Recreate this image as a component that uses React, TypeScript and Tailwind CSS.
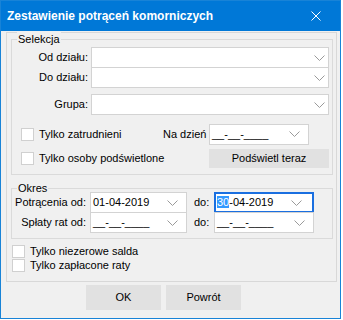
import type { ReactNode } from 'react'

// strzałka rozwijania (combo / data)
function Chevron({ className = '' }: { className?: string }) {
  return (
    <svg width="11" height="6" viewBox="0 0 11 6" className={className}>
      <polyline points="0.5,0.5 5.5,5.5 10.5,0.5" fill="none" stroke="#9a9a9a" strokeWidth="1" />
    </svg>
  )
}

function Combo({ className = '' }: { className?: string }) {
  return (
    <div className={`flex h-[21px] w-[238px] items-center justify-end border border-[#d3d3d3] bg-white pr-[3px] ${className}`}>
      <Chevron />
    </div>
  )
}

function DateBox({ value, focused, className = '' }: { value?: ReactNode; focused?: boolean; className?: string }) {
  return (
    <div
      className={`flex h-[21px] items-center bg-white ${
        focused ? 'border-2 border-[#1a6fe0] pl-[1px]' : 'border border-[#d3d3d3] pl-[2px]'
      } ${className}`}
    >
      <span className="leading-none">{value ?? '__-__-____'}</span>
      <Chevron className={focused ? 'ml-auto mr-[10px]' : 'ml-auto mr-[8px]'} />
    </div>
  )
}

function Check({ label, className = '' }: { label: string; className?: string }) {
  return (
    <div className={`flex items-center ${className}`}>
      <div className="h-[13px] w-[13px] border border-[#d0d0d0] bg-white" />
      <span className="ml-[5px] leading-none">{label}</span>
    </div>
  )
}

function Group({ title, className = '', children }: { title: string; className?: string; children: ReactNode }) {
  return (
    <div className={`relative border border-[#dadada] ${className}`}>
      <span className="absolute -top-[8px] left-[5px] bg-[#f0f0f0] px-[1px] leading-[14px]">{title}</span>
      {children}
    </div>
  )
}

export default function App() {
  return (
    <div className="h-[320px] w-[343px] bg-white font-['Liberation_Sans',Arial,sans-serif] text-[11px] text-black">
      <div className="flex h-[319px] w-[341px] flex-col border border-[#1883d7] bg-[#f0f0f0]">
        {/* pasek tytułu */}
        <div className="flex h-[30px] shrink-0 items-center bg-[#0078d7] pl-[6px] pr-[19px] text-white">
          <span className="text-[12px] font-bold">Zestawienie potrąceń komorniczych</span>
          <svg width="10" height="10" viewBox="0 0 10 10" className="ml-auto">
            <path d="M0.5 0.5 L9.5 9.5 M9.5 0.5 L0.5 9.5" stroke="white" strokeWidth="1" />
          </svg>
        </div>

        <div className="ml-[5px] mt-[1px] flex h-[250px] w-[331px] flex-col border border-[#d8d8d8] pl-[4px] pt-[6px]">
          <Group title="Selekcja" className="h-[136px] w-[322px] pt-[7px]">
            <div className="flex items-center">
              <span className="w-[76px] text-right">Od działu:</span>
              <Combo className="ml-[3px]" />
            </div>
            <div className="-mt-[1px] flex items-center">
              <span className="w-[76px] text-right">Do działu:</span>
              <Combo className="ml-[3px]" />
            </div>
            <div className="mt-[6px] flex items-center">
              <span className="w-[76px] text-right">Grupa:</span>
              <Combo className="ml-[3px]" />
            </div>
            <div className="mt-[9px] flex h-[20px] items-center pl-[9px]">
              <Check label="Tylko zatrudnieni" className="w-[142px]" />
              <span className="w-[46px]">Na dzień</span>
              <DateBox className="w-[100px]" />
            </div>
            <div className="mt-[5px] flex h-[19px] items-center pl-[9px]">
              <Check label="Tylko osoby podświetlone" className="w-[188px]" />
              <div className="flex h-[19px] w-[120px] items-center justify-center bg-[#e1e1e1]">Podświetl teraz</div>
            </div>
          </Group>

          <Group title="Okres" className="mt-[13px] h-[51px] w-[322px] pt-[3px]">
            <div className="flex items-center">
              <span className="w-[74px] text-right">Potrącenia od:</span>
              <DateBox value="01-04-2019" className="ml-[4px] w-[97px]" />
              <span className="ml-[7px] w-[20px]">do:</span>
              <DateBox
                focused
                value={
                  <>
                    <span className="bg-[#3399ff] text-white">30</span>-04-2019
                  </>
                }
                className="w-[100px]"
              />
            </div>
            <div className="-mt-[1px] flex items-center">
              <span className="w-[74px] text-right">Spłaty rat od:</span>
              <DateBox className="ml-[4px] w-[97px]" />
              <span className="ml-[7px] w-[20px]">do:</span>
              <DateBox className="w-[100px]" />
            </div>
          </Group>

          <div className="mt-[6px] flex flex-col gap-[1px] pl-[1px]">
            <Check label="Tylko niezerowe salda" />
            <Check label="Tylko zapłacone raty" />
          </div>
        </div>

        <div className="ml-[85px] mt-[3px] flex gap-[5px]">
          <div className="flex h-[25px] w-[75px] items-center justify-center bg-[#e1e1e1]">OK</div>
          <div className="flex h-[25px] w-[75px] items-center justify-center bg-[#e1e1e1]">Powrót</div>
        </div>
      </div>
    </div>
  )
}
